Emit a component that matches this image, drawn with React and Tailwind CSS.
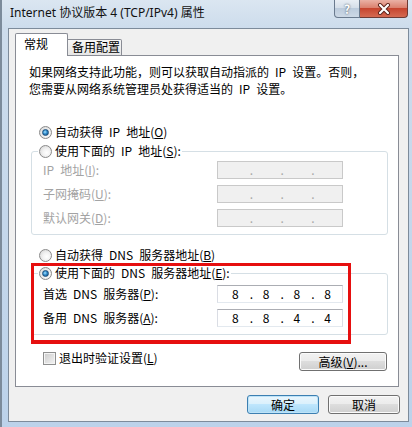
import React from "react";

function Radio({ checked }) {
  return (
    <span className="w-[13px] h-[13px] rounded-full border border-[#8a8a8a] bg-[radial-gradient(circle_at_60%_60%,#ffffff_0,#f2f2f2_40%,#cfcfcf_100%)] flex items-center justify-center shrink-0">
      {checked && (
        <span className="w-[7px] h-[7px] rounded-full bg-[radial-gradient(circle_at_40%_40%,#a9e4ff_0,#2f8bcc_45%,#184a78_100%)] border border-[#1d4f7c]" />
      )}
    </span>
  );
}

function IPBox({ values, disabled }) {
  const segs = values || ["", "", "", ""];
  return (
    <div
      className={
        disabled
          ? "w-[126px] h-[18px] border border-[#c9c9c9] bg-[#f0f0f0] flex items-center pl-[3px] text-[#a8a8a8]"
          : "w-[126px] h-[18px] border border-[#abadb3] border-l-[#dadde4] border-r-[#dadde4] border-b-[#e3e9ef] bg-white flex items-center pl-[3px] text-black"
      }
    >
      {segs.map((v, i) => (
        <React.Fragment key={i}>
          <span className="w-[29px] text-center leading-[14px]">{v}</span>
          {i < 3 && <span className="w-[2px] text-center leading-[14px]">.</span>}
        </React.Fragment>
      ))}
    </div>
  );
}

function Row({ label, disabled, values }) {
  return (
    <div className="flex items-center h-[18px]">
      <span className={disabled ? "w-[174px] text-[#a3a3a3] leading-[14px]" : "w-[174px] leading-[14px]"}>{label}</span>
      <IPBox values={values} disabled={disabled} />
    </div>
  );
}

function Acc({ c }) {
  return (
    <>
      (<span className="underline">{c}</span>)
    </>
  );
}

function Btn({ children, def, w }) {
  return (
    <div
      className={
        (def
          ? "border-[#3c7fb1] bg-[linear-gradient(180deg,#eaf6fd_0,#d9f0fc_50%,#bee6fd_50%,#a7d9f5_100%)] shadow-[inset_0_0_0_1px_#bde3f8] "
          : "border-[#707070] bg-[linear-gradient(180deg,#f2f2f2_0,#ebebeb_50%,#dddddd_50%,#cfcfcf_100%)] shadow-[inset_0_0_0_1px_#fbfbfb] ") +
        "h-[19px] border rounded-[3px] flex items-center justify-center leading-[14px] " +
        w
      }
    >
      {children}
    </div>
  );
}

export default function App() {
  return (
    <div className="w-[412px] h-[427px] overflow-hidden bg-[linear-gradient(180deg,#dbe6f1_0px,#cddcec_28px,#bcd2ea_100%)] border-l-[2px] border-[#7c8b9b] flex flex-col font-['Noto_Sans_CJK_SC',sans-serif] text-[12px] text-black">
      {/* title bar */}
      <div className="h-[28px] flex items-start shrink-0">
        <div className="pl-[8px] pt-[5px] text-[12px] leading-[16px] font-['Noto_Sans','Noto_Sans_CJK_SC',sans-serif] text-[#111]">
          Internet 协议版本 4 (TCP/IPv4) 属性
        </div>
        <div className="ml-auto mr-[4px] flex">
          <div className="w-[26px] h-[18px] rounded-bl-[4px] border border-t-0 border-[#6a7a8e] bg-[linear-gradient(180deg,#e9eef4_0,#d3dde8_50%,#bccbdc_50%,#cdd9e6_100%)] flex items-center justify-center text-white font-bold text-[12px] leading-[14px] [text-shadow:0_0_2px_#2e3c4d]">
            ?
          </div>
          <div className="w-[48px] h-[18px] rounded-br-[4px] border border-t-0 border-l-0 border-[#6e3a34] bg-[linear-gradient(180deg,#eab1a5_0,#d97c69_50%,#c6452f_50%,#d56a52_100%)] flex items-center justify-center">
            <svg width="14" height="12" viewBox="0 0 14 12">
              <path d="M3 2 L11 10 M11 2 L3 10" stroke="#5a2119" strokeWidth="4" strokeLinecap="round" />
              <path d="M3 2 L11 10 M11 2 L3 10" stroke="#ffffff" strokeWidth="2.2" strokeLinecap="round" />
            </svg>
          </div>
        </div>
      </div>

      {/* client area */}
      <div className="ml-[6px] w-[401px] h-[394px] border border-[#7d8b9b] bg-[#f0f0f0] flex flex-col">
        {/* tabs */}
        <div className="relative z-10 mt-[4px] ml-[6px] h-[23px] flex items-end">
          <div className="w-[53px] h-[23px] bg-white border border-b-0 border-[#898c95] rounded-t-[2px] pl-[8px] pt-[3px] leading-[14px]">
            常规
          </div>
          <div className="w-[54px] h-[17px] bg-[linear-gradient(180deg,#f7f7f7,#e6e6e6)] border border-l-0 border-[#898c95] rounded-tr-[2px] pl-[4px] leading-[14px]">
            备用配置
          </div>
        </div>

        {/* panel */}
        <div className="relative -mt-[1px] ml-[6px] w-[384px] h-[332px] bg-white border border-[#898c95] flex flex-col">
          <div className="pl-[13px] pt-[7px] leading-[17px]">
            <div>如果网络支持此功能，则可以获取自动指派的{"\u2002"}IP{"\u2002"}设置。否则，</div>
            <div>您需要从网络系统管理员处获得适当的{"\u2002"}IP{"\u2002"}设置。</div>
          </div>

          <div className="mt-[28px] ml-[23px] h-[14px] flex items-center gap-[3px] leading-[14px]">
            <Radio checked />
            <span>
              自动获得{"\u2002"}IP{"\u2002"}地址<Acc c="O" />
            </span>
          </div>

          <fieldset className="mt-[5px] ml-[15px] w-[357px] border border-[#d5dfe5] rounded-[3px] px-[6px] pb-[7px]">
            <legend className="px-[1px]">
              <div className="h-[14px] flex items-center gap-[3px] leading-[14px]">
                <Radio />
                <span>
                  使用下面的{"\u2002"}IP{"\u2002"}地址<Acc c="S" />:
                </span>
              </div>
            </legend>
            <div className="pl-[5px] pt-[3px] flex flex-col gap-[6px]">
              <Row label={<>IP{"\u2002"}地址<Acc c="I" />:</>} disabled />
              <Row label={<>子网掩码<Acc c="U" />:</>} disabled />
              <Row label={<>默认网关<Acc c="D" />:</>} disabled />
            </div>
          </fieldset>

          <div className="mt-[13px] ml-[23px] h-[14px] flex items-center gap-[3px] leading-[14px]">
            <Radio />
            <span>
              自动获得{"\u2002"}DNS{"\u2002"}服务器地址<Acc c="B" />
            </span>
          </div>

          <fieldset className="mt-[4px] ml-[15px] w-[357px] border border-[#d5dfe5] rounded-[3px] px-[6px] pb-[7px]">
            <legend className="px-[1px]">
              <div className="h-[14px] flex items-center gap-[3px] leading-[14px]">
                <Radio checked />
                <span>
                  使用下面的{"\u2002"}DNS{"\u2002"}服务器地址<Acc c="E" />:
                </span>
              </div>
            </legend>
            <div className="pl-[5px] pt-[5px] flex flex-col gap-[6px]">
              <Row label={<>首选{"\u2002"}DNS{"\u2002"}服务器<Acc c="P" />:</>} values={["8", "8", "8", "8"]} />
              <Row label={<>备用{"\u2002"}DNS{"\u2002"}服务器<Acc c="A" />:</>} values={["8", "8", "4", "4"]} />
            </div>
          </fieldset>

          <div className="mt-[16px] pl-[27px] pr-[11px] flex justify-between items-start">
            <div className="h-[14px] flex items-center gap-[3px] leading-[14px]">
              <span className="w-[13px] h-[13px] border border-[#8e8f8f] bg-[linear-gradient(135deg,#cbcbcb,#f4f4f4)] shadow-[inset_0_0_0_1px_#f4f4f4]" />
              <span>
                退出时验证设置<Acc c="L" />
              </span>
            </div>
            <div className="mt-[1px]">
              <Btn w="w-[88px]">
                高级<Acc c="V" />...
              </Btn>
            </div>
          </div>

          {/* red annotation box */}
          <div className="absolute left-[15px] top-[207px] w-[320px] h-[81px] border-[3px] border-b-4 border-[#e60f0f] pointer-events-none" />
        </div>

        {/* bottom buttons */}
        <div className="mt-[8px] pr-[8px] flex justify-end gap-[9px]">
          <Btn def w="w-[72px]">确定</Btn>
          <Btn w="w-[72px]">取消</Btn>
        </div>
      </div>
    </div>
  );
}
